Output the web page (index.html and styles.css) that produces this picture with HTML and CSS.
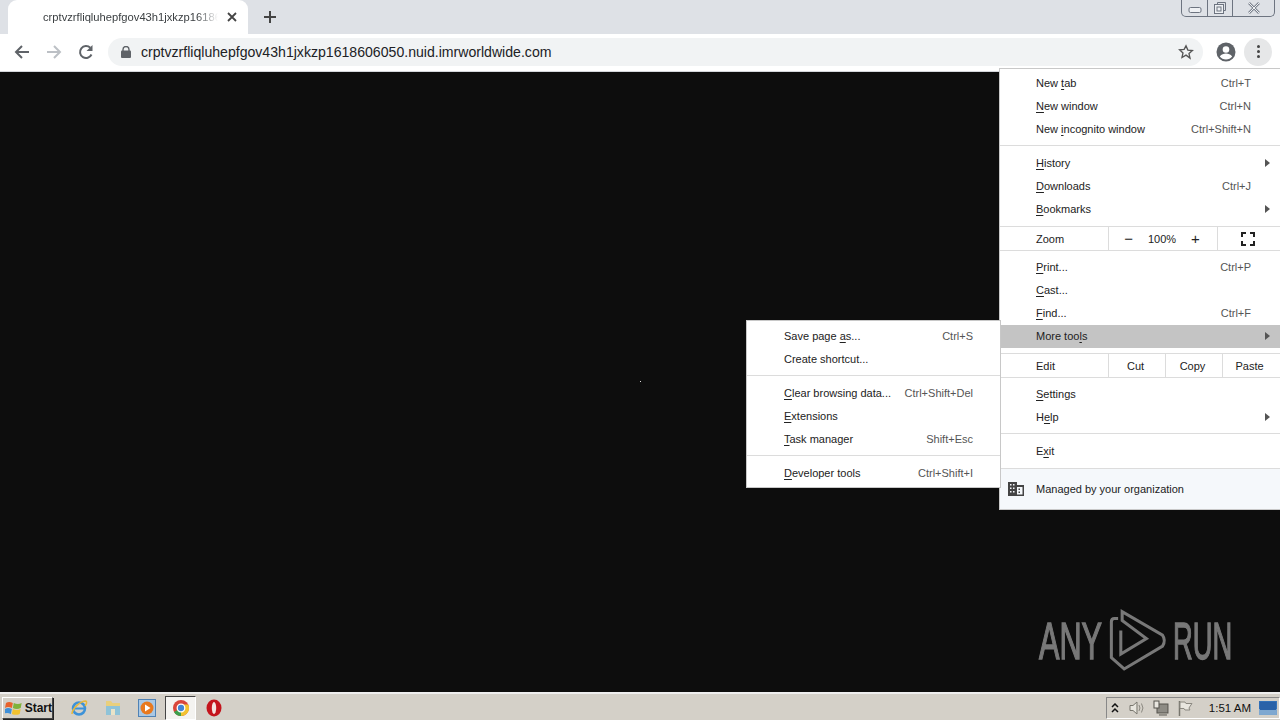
FILE: index.html
```html
<!DOCTYPE html>
<html lang="en">
<head>
    <meta charset="UTF-8">
    <title>crptvzrfliqluhepfgov43h1jxkzp1618606050.nuid.imrworldwide.com</title>
    <link rel="stylesheet" href="styles.css">
</head>
<body>
    <div class="tab-strip">
        <div class="tab">
            <div class="tab-title">crptvzrfliqluhepfgov43h1jxkzp16186</div>
            <svg class="tab-close" width="10" height="10" viewBox="0 0 10 10"><path d="M1 1l8 8M9 1l-8 8" stroke="#444" stroke-width="1.8"/></svg>
        </div>
        <svg class="new-tab" width="12" height="12" viewBox="0 0 12 12"><path d="M6 0v12M0 6h12" stroke="#444" stroke-width="2"/></svg>
        <div class="window-controls">
            <div class="win-btn win-min"><svg width="14" height="8" viewBox="0 0 14 8"><rect x="1" y="1.5" width="12" height="5" rx="1.5" fill="#eef0f3" stroke="#6d7480"/></svg></div>
            <div class="win-btn win-max"><svg width="14" height="14" viewBox="0 0 14 14"><path d="M4.5 3.500V1.500H12.500V9.500H10" fill="none" stroke="#6d7480"/><rect x="1.500" y="3.500" width="9" height="9" fill="#eef0f3" stroke="#6d7480"/><rect x="4" y="6" width="4" height="4" fill="none" stroke="#6d7480"/></svg></div>
            <div class="win-btn win-close"><svg width="14" height="12" viewBox="0 0 14 12"><path d="M2 1l10 10M12 1L2 11" stroke="#7d848f" stroke-width="2.500"/><path d="M2 1l10 10M12 1L2 11" stroke="#eef0f3" stroke-width="1"/></svg></div>
        </div>
    </div>

    <div class="toolbar">
        <svg class="nav-icon" width="16" height="16" viewBox="0 0 16 16"><path d="M15 8H2M8 2L2 8l6 6" fill="none" stroke="#5f6368" stroke-width="2"/></svg>
        <svg class="nav-icon" width="16" height="16" viewBox="0 0 16 16"><path d="M1 8h13M8 2l6 6-6 6" fill="none" stroke="#bcc0c5" stroke-width="2"/></svg>
        <svg class="nav-icon" width="16" height="16" viewBox="0 0 16 16"><path d="M13.500 10.500A6 6 0 1 1 12.300 3.800" fill="none" stroke="#5f6368" stroke-width="2"/><path d="M14.500 1v6h-6z" fill="#5f6368"/></svg>
        <div class="omnibox">
            <svg width="10" height="12" viewBox="0 0 10 12"><path d="M2 5V3.500a3 3 0 0 1 6 0V5" fill="none" stroke="#5f6368" stroke-width="1.400"/><rect y="4.500" width="10" height="7.500" rx="1" fill="#5f6368"/></svg>
            <div class="url">crptvzrfliqluhepfgov43h1jxkzp1618606050.nuid.imrworldwide.com</div>
            <svg class="star" width="16" height="16" viewBox="0 0 24 24"><path d="M12 2.800l2.800 6.300 6.800.7-5.100 4.600 1.500 6.800L12 16.700l-6 3.500 1.500-6.800-5.100-4.600 6.800-.7z" fill="none" stroke="#555" stroke-width="2"/></svg>
        </div>
        <svg class="avatar" width="20" height="20" viewBox="0 0 20 20"><circle cx="10" cy="10" r="9.500" fill="#5f6368"/><circle cx="10" cy="7.500" r="3.300" fill="#fff"/><path d="M3.800 14.500c1.500-2.300 4-3 6.200-3s4.700.7 6.200 3c-1.500 2-3.700 3-6.200 3s-4.700-1-6.200-3z" fill="#fff"/></svg>
        <div class="menu-button"><span></span><span></span><span></span></div>
    </div>

    <div class="page-content">
        <div class="page-dot"></div>

        <div class="any-run">
            <span class="logo-any">ANY</span>
            <svg width="60" height="66" viewBox="262 28 178 190"><path d="M292 56H281Q272 56 272 66V172L310 206 424 138Q434 120 424 106L304 36V62L376 116 300 162V92" fill="none" stroke="#787878" stroke-width="9"/></svg>
            <span class="logo-run">RUN</span>
        </div>

        <div class="menu main-menu">
            <div class="menu-item"><span class="label">New <u>t</u>ab</span><span class="shortcut">Ctrl+T</span></div>
            <div class="menu-item"><span class="label"><u>N</u>ew window</span><span class="shortcut">Ctrl+N</span></div>
            <div class="menu-item"><span class="label">New <u>i</u>ncognito window</span><span class="shortcut">Ctrl+Shift+N</span></div>
            <div class="menu-sep"></div>
            <div class="menu-item has-sub"><span class="label"><u>H</u>istory</span></div>
            <div class="menu-item"><span class="label"><u>D</u>ownloads</span><span class="shortcut">Ctrl+J</span></div>
            <div class="menu-item has-sub"><span class="label"><u>B</u>ookmarks</span></div>
            <div class="menu-split">
                <span class="split-label">Zoom</span>
                <div class="zoom-cell"><span class="zoom-sign">−</span><span>100%</span><span class="zoom-sign">+</span></div>
                <div class="fullscreen-cell"><svg width="14" height="14" viewBox="0 0 14 14"><path d="M1 5V1h4M9 1h4v4M13 9v4H9M5 13H1V9" fill="none" stroke="#222" stroke-width="2"/></svg></div>
            </div>
            <div class="menu-item"><span class="label"><u>P</u>rint...</span><span class="shortcut">Ctrl+P</span></div>
            <div class="menu-item"><span class="label"><u>C</u>ast...</span></div>
            <div class="menu-item"><span class="label"><u>F</u>ind...</span><span class="shortcut">Ctrl+F</span></div>
            <div class="menu-item has-sub active"><span class="label">More too<u>l</u>s</span></div>
            <div class="menu-split">
                <span class="split-label">Edit</span>
                <div class="edit-cell">Cut</div>
                <div class="edit-cell">Copy</div>
                <div class="edit-cell">Paste</div>
            </div>
            <div class="menu-item"><span class="label"><u>S</u>ettings</span></div>
            <div class="menu-item has-sub"><span class="label">H<u>e</u>lp</span></div>
            <div class="menu-sep"></div>
            <div class="menu-item"><span class="label">E<u>x</u>it</span></div>
            <div class="menu-sep last"></div>
            <div class="managed">
                <svg width="16" height="14" viewBox="0 0 16 14"><path d="M0 0h9v3h7v11H0z" fill="#444"/><path d="M2 2h1.500v1.500H2zM5 2h1.500v1.500H5zM2 5.500h1.500V7H2zM5 5.500h1.500V7H5zM2 9h1.500v1.500H2zM5 9h1.500v1.500H5zM9 5h5.500v7.500H9z" fill="#f5f8fb"/><path d="M10.500 6.500H12V8h-1.500zM10.500 9.500H12V11h-1.500z" fill="#444"/></svg>
                <span>Managed by your organization</span>
            </div>
        </div>

        <div class="menu sub-menu">
            <div class="menu-item"><span class="label">Save page <u>a</u>s...</span><span class="shortcut">Ctrl+S</span></div>
            <div class="menu-item"><span class="label">Create shortcut...</span></div>
            <div class="menu-sep"></div>
            <div class="menu-item"><span class="label"><u>C</u>lear browsing data...</span><span class="shortcut">Ctrl+Shift+Del</span></div>
            <div class="menu-item"><span class="label"><u>E</u>xtensions</span></div>
            <div class="menu-item"><span class="label"><u>T</u>ask manager</span><span class="shortcut">Shift+Esc</span></div>
            <div class="menu-sep"></div>
            <div class="menu-item"><span class="label"><u>D</u>eveloper tools</span><span class="shortcut">Ctrl+Shift+I</span></div>
        </div>
    </div>

    <div class="taskbar">
        <div class="start-button">
            <svg width="18" height="16" viewBox="0 0 18 16"><path d="M1 3q3-2 7 0l-1 5q-4-2-7 0z" fill="#e8622c"/><path d="M9 3q4 2 8 0l-1 5q-4 2-8 0z" fill="#7fb23a"/><path d="M0 9q3-2 7 0l-1 5q-4-2-7 0z" fill="#3f8fd8"/><path d="M8 9q4 2 8 0l-1 5q-4 2-8 0z" fill="#f2c230"/></svg>
            <span>Start</span>
        </div>
        <div class="quick-launch">
            <div class="task-item"><svg width="18" height="18" viewBox="0 0 18 18"><circle cx="9" cy="9.500" r="6" fill="none" stroke="#3d92d8" stroke-width="2.500"/><path d="M4 9.500h10" stroke="#3d92d8" stroke-width="2"/><path d="M2 15C2 10 10 2 16 2c1.500 1 0 4-1 5" fill="none" stroke="#e8b83a" stroke-width="1.500"/></svg></div>
            <div class="task-item"><svg width="18" height="18" viewBox="0 0 18 18"><path d="M2 2h5l1.500 2H16v12H2z" fill="#e9cf7c"/><rect x="2" y="7" width="14" height="9" fill="#8fc3d8"/><rect x="7" y="10" width="4" height="6" fill="#e9e3c8"/></svg></div>
            <div class="task-item"><svg width="18" height="18" viewBox="0 0 18 18"><rect x=".5" y=".5" width="17" height="17" fill="#a9c8e4" stroke="#4f82b5"/><circle cx="9" cy="9" r="6.500" fill="#e8791e"/><path d="M7 5.500v7l5.500-3.500z" fill="#fff"/></svg></div>
            <div class="task-item current"><svg width="16" height="16" viewBox="0 0 16 16"><circle cx="8" cy="8" r="8" fill="#d9463a"/><path d="M8 8L1 12a8 8 0 0 0 7 4 8 8 0 0 0 2-.3z" fill="#3d9f4c"/><path d="M8 4.500h7.300A8 8 0 0 1 8 16z" fill="#f3c32f"/><circle cx="8" cy="8" r="3.800" fill="#4285d4" stroke="#fff" stroke-width="1.300"/></svg></div>
            <div class="task-item"><svg width="16" height="18" viewBox="0 0 16 18"><ellipse cx="8" cy="9" rx="7.500" ry="8.500" fill="#c4141c"/><ellipse cx="8" cy="9" rx="2.200" ry="6" fill="#f4e4e0"/></svg></div>
        </div>
        <div class="tray">
            <svg class="tray-expand" width="8" height="10" viewBox="0 0 8 10"><path d="M1 4l3-3 3 3M1 9l3-3 3 3" fill="none" stroke="#111" stroke-width="1.500"/></svg>
            <svg width="16" height="16" viewBox="0 0 16 16"><path d="M1 5.500h3L8 2v12L4 10.500H1z" fill="#e8e6df" stroke="#77756d"/><path d="M10 5q2 3 0 6M12.500 3.500q3 4.500 0 9" fill="none" stroke="#8a8880"/></svg>
            <svg width="16" height="16" viewBox="0 0 16 16"><rect x="4" y="4" width="11" height="9" fill="#8d8b84" stroke="#55534d"/><rect x="1" y="1" width="5" height="7" fill="#e8e6df" stroke="#55534d"/><path d="M6 15h8" stroke="#55534d"/></svg>
            <svg width="16" height="16" viewBox="0 0 16 16"><path d="M2.500 1v15" stroke="#77756d" stroke-width="1.500"/><path d="M3 2h5l1 1.500h6L12 8l1 2H8L7 8.500H3z" fill="#e8e6df" stroke="#8a8880"/></svg>
            <span class="clock">1:51 AM</span>
            <svg class="show-desktop" width="18" height="14" viewBox="0 0 18 14"><rect width="18" height="14" fill="#2f6fb8"/><rect y="8" width="18" height="6" fill="#7fa8d0"/><rect x="1" y="1" width="16" height="8" fill="#2a62a8"/></svg>
        </div>
    </div>
</body>
</html>
```

FILE: styles.css
```css
html, body {
    height: 100%;
}

body {
    margin: 0;
    display: flex;
    flex-direction: column;
    font-family: "Liberation Sans", Arial, sans-serif;
    font-size: 11px;
    color: #222;
    overflow: hidden;
}

u {
    text-underline-offset: 2px;
}

/* tab strip */
.tab-strip {
    height: 34px;
    flex-shrink: 0;
    display: flex;
    align-items: flex-start;
    background: #dee1e6;
    position: relative;
}

.tab {
    width: 240px;
    height: 34px;
    margin-left: 8px;
    padding: 0 11px 0 35px;
    box-sizing: border-box;
    display: flex;
    align-items: center;
    gap: 9px;
    background: #fff;
    border-radius: 9px 9px 0 0;
}

.tab-title {
    width: 175px;
    white-space: nowrap;
    font-size: 11.200px;
    color: #3c4043;
    -webkit-mask-image: linear-gradient(90deg, #000 88%, transparent 100%);
    mask-image: linear-gradient(90deg, #000 88%, transparent 100%);
}

.new-tab {
    margin: 11px 0 0 16px;
}

.window-controls {
    margin-left: auto;
    margin-right: 5px;
    height: 16px;
    display: flex;
    border: 1px solid #6d7480;
    border-top: none;
    border-radius: 0 0 5px 5px;
}

.win-btn {
    display: flex;
    align-items: center;
    justify-content: center;
    height: 16px;
}

.win-min {
    width: 25px;
    padding-top: 4px;
    box-sizing: border-box;
}

.win-max {
    width: 24px;
    border-left: 1px solid #6d7480;
    border-right: 1px solid #6d7480;
}

.win-close {
    width: 41px;
}

/* toolbar */
.toolbar {
    height: 38px;
    flex-shrink: 0;
    display: flex;
    align-items: center;
    box-sizing: border-box;
    padding: 0 8px 2px 14px;
    background: #fff;
    border-bottom: 1px solid #d4d6da;
}

.nav-icon {
    margin-right: 16px;
}

.omnibox {
    width: 1096px;
    height: 28px;
    margin-left: -2px;
    padding: 0 9px 0 13px;
    box-sizing: border-box;
    display: flex;
    align-items: center;
    gap: 10px;
    background: #f1f3f4;
    border-radius: 14px;
}

.url {
    font-size: 14.100px;
    color: #202124;
    white-space: nowrap;
}

.star {
    margin-left: auto;
}

.avatar {
    margin-left: 13px;
}

.menu-button {
    width: 28px;
    height: 28px;
    margin-left: 8px;
    display: flex;
    flex-direction: column;
    align-items: center;
    justify-content: center;
    gap: 2px;
    background: #e6e7e8;
    border-radius: 50%;
}

.menu-button span {
    width: 3px;
    height: 3px;
    background: #444;
    border-radius: 50%;
}

/* page */
.page-content {
    flex: 1;
    position: relative;
    background: #0d0d0d;
}

.page-dot {
    position: absolute;
    left: 640px;
    top: 309px;
    width: 1px;
    height: 1px;
    background: #ddd;
}

.any-run {
    position: absolute;
    left: 1039px;
    top: 536px;
    display: flex;
    align-items: center;
    gap: 5px;
    font-size: 52px;
    color: #787878;
    white-space: nowrap;
    -webkit-text-stroke: 1.500px #787878;
}

.logo-any, .logo-run {
    display: block;
    transform-origin: left center;
}

.logo-any {
    width: 64px;
    transform: scaleX(0.59);
}

.logo-run {
    width: 59px;
    transform: scaleX(0.525);
}

/* menus */
.menu {
    position: absolute;
    box-sizing: border-box;
    background: #fff;
    border: 1px solid #c8c8c8;
}

.main-menu {
    left: 999px;
    top: -4px;
    width: 282px;
    height: 442px;
    padding-top: 3px;
}

.sub-menu {
    left: 746px;
    top: 248px;
    width: 255px;
    height: 168px;
    padding-top: 4px;
}

.menu-item {
    height: 23px;
    box-sizing: border-box;
    display: flex;
    align-items: center;
    justify-content: space-between;
    padding: 0 29px 2px 36px;
    white-space: nowrap;
    position: relative;
}

.sub-menu .menu-item {
    padding: 0 27px 2px 37px;
}

.menu-item.active {
    background: #c4c4c4;
}

.has-sub::after {
    content: "";
    position: absolute;
    right: 10px;
    top: 7px;
    border-left: 5px solid #555;
    border-top: 4px solid transparent;
    border-bottom: 4px solid transparent;
}

.shortcut {
    color: #555;
}

.menu-sep {
    height: 1px;
    margin: 4px 0 6px;
    background: #dcdcdc;
}

.menu-sep.last {
    margin: 5px 0 0;
}

.menu-split {
    height: 25px;
    margin: 5px 0;
    box-sizing: border-box;
    display: flex;
    align-items: center;
    border-top: 1px solid #dcdcdc;
    border-bottom: 1px solid #dcdcdc;
}

.split-label {
    width: 108px;
    padding-left: 36px;
    box-sizing: border-box;
}

.zoom-cell, .fullscreen-cell, .edit-cell {
    height: 100%;
    display: flex;
    align-items: center;
    justify-content: center;
    border-left: 1px solid #dcdcdc;
    box-sizing: border-box;
}

.zoom-cell {
    width: 109px;
    padding-right: 2px;
    gap: 15px;
}

.zoom-sign {
    font-size: 15px;
}

.fullscreen-cell {
    width: 63px;
    padding-right: 2px;
}

.edit-cell {
    width: 57px;
    padding-right: 3px;
}

.managed {
    height: 40px;
    display: flex;
    align-items: center;
    gap: 12px;
    padding-left: 8px;
    background: #f5f8fb;
}

/* taskbar */
.taskbar {
    height: 28px;
    flex-shrink: 0;
    box-sizing: border-box;
    display: flex;
    align-items: center;
    padding: 1px 0 0 2px;
    background: #d4d0c8;
    border-top: 2px solid #eee;
}

.start-button {
    width: 51px;
    height: 22px;
    box-sizing: border-box;
    display: flex;
    align-items: center;
    gap: 2px;
    padding-left: 2px;
    font-size: 12px;
    font-weight: bold;
    color: #111;
    border: 1px solid;
    border-color: #fff #444 #444 #fff;
    box-shadow: 1px 1px 0 #222;
}

.quick-launch {
    display: flex;
    align-items: center;
    margin-left: 9px;
}

.task-item {
    width: 34px;
    height: 24px;
    display: flex;
    align-items: center;
    justify-content: center;
}

.task-item.current {
    width: 31px;
    margin: 0 1px;
    background: #f4f3f0;
    border: 1px solid;
    border-color: #444 #fff #fff #444;
    box-sizing: border-box;
}

.tray {
    margin-left: auto;
    width: 174px;
    height: 22px;
    box-sizing: border-box;
    display: flex;
    align-items: center;
    gap: 8px;
    padding-left: 4px;
    border: 1px solid;
    border-color: #888 #fff #fff #888;
}

.tray-expand {
    margin-right: 2px;
}

.clock {
    margin-left: 8px;
    font-size: 11.500px;
    color: #111;
    white-space: nowrap;
}

.show-desktop {
    margin-left: auto;
    margin-right: 2px;
}
```
